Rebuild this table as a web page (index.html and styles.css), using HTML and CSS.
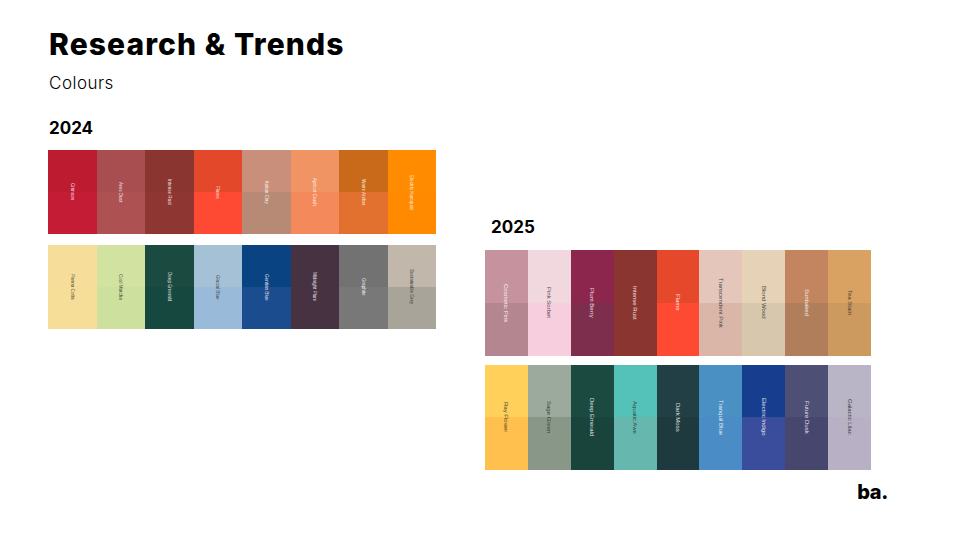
FILE: index.html
```html
<!DOCTYPE html>
<html lang="en">
<head>
<meta charset="utf-8">
<title>Research &amp; Trends – Colours</title>
<link rel="stylesheet" href="styles.css">
</head>
<body>
<div class="page">
  <h1 class="title">Research &amp; Trends</h1>
  <p class="subtitle">Colours</p>

  <div class="years">
    <section class="year year-2024">
      <h2 class="year-label">2024</h2>
      <div class="palette">
        <div class="row">
          <div class="sw light"><span class="a" style="background:#bd1c30"></span><span class="b" style="background:#c41c35"></span><span class="name">Crimson</span></div>
          <div class="sw light"><span class="a" style="background:#a84e50"></span><span class="b" style="background:#ad5153"></span><span class="name">Ares Dust</span></div>
          <div class="sw light"><span class="a" style="background:#8b3530"></span><span class="b" style="background:#8e3632"></span><span class="name">Intense Rust</span></div>
          <div class="sw light"><span class="a" style="background:#e3482b"></span><span class="b" style="background:#ff4a33"></span><span class="name">Flame</span></div>
          <div class="sw light"><span class="a" style="background:#c98f7b"></span><span class="b" style="background:#b68a74"></span><span class="name">Italian Clay</span></div>
          <div class="sw light"><span class="a" style="background:#f09463"></span><span class="b" style="background:#f48a5b"></span><span class="name">Apricot Crush</span></div>
          <div class="sw light"><span class="a" style="background:#c86a1a"></span><span class="b" style="background:#e2702e"></span><span class="name">Warm Amber</span></div>
          <div class="sw light"><span class="a" style="background:#ff8c00"></span><span class="b" style="background:#ff8a00"></span><span class="name">Electric Kumquat</span></div>
        </div>
        <div class="row">
          <div class="sw dark"><span class="a" style="background:#f6de9a"></span><span class="b" style="background:#f6dd98"></span><span class="name">Panna Cotta</span></div>
          <div class="sw dark"><span class="a" style="background:#d2e2a0"></span><span class="b" style="background:#cee09e"></span><span class="name">Cool Matcha</span></div>
          <div class="sw light"><span class="a" style="background:#1b4a40"></span><span class="b" style="background:#174840"></span><span class="name">Deep Emerald</span></div>
          <div class="sw dark"><span class="a" style="background:#a5c1d6"></span><span class="b" style="background:#99bad9"></span><span class="name">Glacial Blue</span></div>
          <div class="sw light"><span class="a" style="background:#0a4382"></span><span class="b" style="background:#1b4c8e"></span><span class="name">Gentian Blue</span></div>
          <div class="sw light"><span class="a" style="background:#463240"></span><span class="b" style="background:#463240"></span><span class="name">Midnight Plum</span></div>
          <div class="sw light"><span class="a" style="background:#727272"></span><span class="b" style="background:#787878"></span><span class="name">Graphite</span></div>
          <div class="sw dark"><span class="a" style="background:#c1b7aa"></span><span class="b" style="background:#a9a499"></span><span class="name">Sustainable Grey</span></div>
        </div>
      </div>
    </section>

    <section class="year year-2025">
      <h2 class="year-label">2025</h2>
      <div class="palette">
        <div class="row">
          <div class="sw light"><span class="a" style="background:#c6929e"></span><span class="b" style="background:#b48790"></span><span class="name">Cosmetic Pink</span></div>
          <div class="sw dark"><span class="a" style="background:#f0d8de"></span><span class="b" style="background:#f6cedd"></span><span class="name">Pink Sorbet</span></div>
          <div class="sw light"><span class="a" style="background:#8c264c"></span><span class="b" style="background:#7d2e4c"></span><span class="name">Plum Berry</span></div>
          <div class="sw light"><span class="a" style="background:#8b3530"></span><span class="b" style="background:#8b3530"></span><span class="name">Intense Rust</span></div>
          <div class="sw light"><span class="a" style="background:#e6482b"></span><span class="b" style="background:#ff4a33"></span><span class="name">Flame</span></div>
          <div class="sw dark"><span class="a" style="background:#e5c6ba"></span><span class="b" style="background:#dab6a9"></span><span class="name">Transcendent Pink</span></div>
          <div class="sw dark"><span class="a" style="background:#e6d2b6"></span><span class="b" style="background:#d7c7ac"></span><span class="name">Blond Wood</span></div>
          <div class="sw light"><span class="a" style="background:#c38460"></span><span class="b" style="background:#b07e5a"></span><span class="name">Sunbaked</span></div>
          <div class="sw dark"><span class="a" style="background:#d9a263"></span><span class="b" style="background:#cc995e"></span><span class="name">Tea Stain</span></div>
        </div>
        <div class="row">
          <div class="sw dark"><span class="a" style="background:#ffd05a"></span><span class="b" style="background:#ffc04d"></span><span class="name">Ray Flower</span></div>
          <div class="sw dark"><span class="a" style="background:#9baa9c"></span><span class="b" style="background:#889788"></span><span class="name">Sage Green</span></div>
          <div class="sw light"><span class="a" style="background:#1b4a40"></span><span class="b" style="background:#18443c"></span><span class="name">Deep Emerald</span></div>
          <div class="sw dark"><span class="a" style="background:#55c2ba"></span><span class="b" style="background:#66b8ae"></span><span class="name">Aquatic Awe</span></div>
          <div class="sw light"><span class="a" style="background:#223f45"></span><span class="b" style="background:#1f3a3e"></span><span class="name">Dark Moss</span></div>
          <div class="sw light"><span class="a" style="background:#4b90c3"></span><span class="b" style="background:#4a8cc5"></span><span class="name">Tranquil Blue</span></div>
          <div class="sw light"><span class="a" style="background:#173e8e"></span><span class="b" style="background:#3a4c9c"></span><span class="name">Electric Indigo</span></div>
          <div class="sw light"><span class="a" style="background:#4e4f74"></span><span class="b" style="background:#47466e"></span><span class="name">Future Dusk</span></div>
          <div class="sw dark"><span class="a" style="background:#b9b4c6"></span><span class="b" style="background:#b8b1c6"></span><span class="name">Galactic Lilac</span></div>
        </div>
      </div>
    </section>
  </div>

  <footer class="footer"><span class="logo">ba.</span></footer>
</div>
</body>
</html>
```

FILE: styles.css
```css
* { box-sizing: border-box; }

html, body {
  margin: 0;
  padding: 0;
  background: #ffffff;
}

body {
  width: 960px;
  height: 540px;
  overflow: hidden;
  font-family: Inter, "Noto Sans", "Liberation Sans", sans-serif;
  color: #000;
}

.page {
  padding: 26px 0 0 48px;
}

.title {
  margin: 0 0 0 1px;
  font-size: 30px;
  line-height: 36px;
  font-weight: 800;
  letter-spacing: 1.1px;
}

.subtitle {
  margin: 11px 0 0 1px;
  font-size: 17px;
  line-height: 20px;
  font-weight: 300;
  letter-spacing: 0.5px;
}

.years {
  display: flex;
  align-items: flex-start;
  margin-top: 25px;
}

.year-label {
  margin: 0 0 0 1px;
  font-size: 17px;
  line-height: 20px;
  font-weight: 700;
}

.palette {
  display: flex;
  flex-direction: column;
}

.row {
  display: flex;
}

.sw {
  flex: 1 1 0;
  display: grid;
  grid-template-rows: 1fr 1fr;
  grid-template-columns: 1fr;
}

.sw .a { grid-row: 1; grid-column: 1; }
.sw .b { grid-row: 2; grid-column: 1; }

.sw .name {
  grid-row: 1 / 3;
  grid-column: 1;
  align-self: center;
  justify-self: center;
  writing-mode: vertical-rl;
  font-family: "Liberation Sans", Arial, sans-serif;
  white-space: nowrap;
}

.sw.light .name { color: rgba(255, 255, 255, 0.88); }
.sw.dark .name { color: rgba(40, 40, 40, 0.85); }

/* 2024 */
.year-2024 .palette {
  width: 388px;
  margin-top: 12px;
  gap: 11px;
}
.year-2024 .row { height: 84px; }
.year-2024 .name { font-size: 4.6px; }

/* 2025 */
.year-2025 {
  margin-left: 49px;
  margin-top: 99px;
}
.year-2025 .year-label { margin-left: 6px; }
.year-2025 .palette {
  width: 386px;
  margin-top: 13px;
  gap: 9px;
}
.year-2025 .row { height: 105.5px; }
.year-2025 .name { font-size: 6px; }

.footer {
  display: flex;
  justify-content: flex-end;
  padding-right: 72px;
  margin-top: 10px;
}

.logo {
  font-size: 20px;
  line-height: 24px;
  font-weight: 800;
  letter-spacing: -0.3px;
}
```
